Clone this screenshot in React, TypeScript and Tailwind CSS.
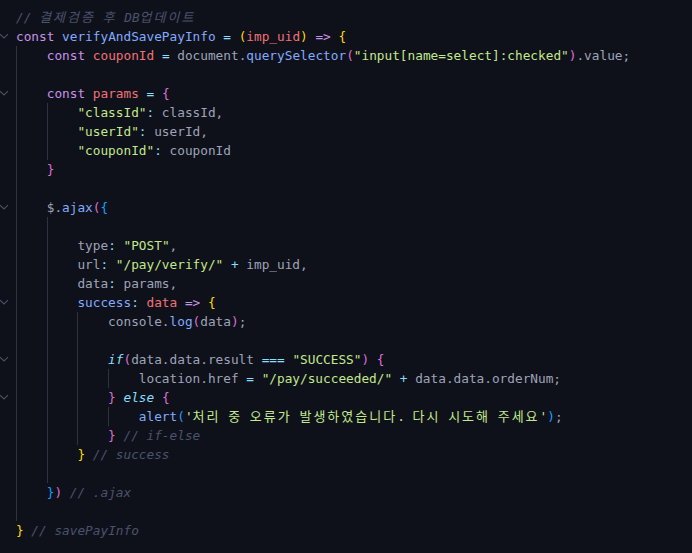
import React from "react";

type Tok = [string, string];

const K = "text-[#c792ea]";
const F = "text-[#82aaff]";
const O = "text-[#89ddff]";
const OI = "text-[#89ddff] italic";
const V = "text-[#f07178]";
const P = "text-[#9ea3b8]";
const S = "text-[#c3e88d]";
const C = "text-[#4b526d] italic";
const B1 = "text-[#ffd700]";
const B2 = "text-[#da70d6]";
const B3 = "text-[#179fff]";

type Line = { indent: number; guides: number; fold?: boolean; toks: Tok[] };

const lines: Line[] = [
  { indent: 0, guides: 0, toks: [["// 결제검증 후 DB업데이트", C]] },
  {
    indent: 0,
    guides: 0,
    fold: true,
    toks: [
      ["const", K],
      [" ", P],
      ["verifyAndSavePayInfo", F],
      [" = ", O],
      ["(", B1],
      ["imp_uid", V],
      [")", B1],
      [" => ", K],
      ["{", B1],
    ],
  },
  {
    indent: 1,
    guides: 1,
    toks: [
      ["const", K],
      [" ", P],
      ["couponId", V],
      [" = ", O],
      ["document.", P],
      ["querySelector", F],
      ["(", B2],
      ['"input[name=select]:checked"', S],
      [")", B2],
      [".value;", P],
    ],
  },
  { indent: 0, guides: 1, toks: [] },
  {
    indent: 1,
    guides: 1,
    fold: true,
    toks: [
      ["const", K],
      [" ", P],
      ["params", V],
      [" = ", O],
      ["{", B2],
    ],
  },
  { indent: 2, guides: 2, toks: [['"classId"', S], [":", O], [" classId,", P]] },
  { indent: 2, guides: 2, toks: [['"userId"', S], [":", O], [" userId,", P]] },
  { indent: 2, guides: 2, toks: [['"couponId"', S], [":", O], [" couponId", P]] },
  { indent: 1, guides: 1, toks: [["}", B2]] },
  { indent: 0, guides: 1, toks: [] },
  {
    indent: 1,
    guides: 1,
    fold: true,
    toks: [
      ["$.", P],
      ["ajax", F],
      ["(", B2],
      ["{", B3],
    ],
  },
  { indent: 0, guides: 2, toks: [] },
  { indent: 2, guides: 2, toks: [["type", P], [":", O], [" ", P], ['"POST"', S], [",", P]] },
  {
    indent: 2,
    guides: 2,
    toks: [
      ["url", P],
      [":", O],
      [" ", P],
      ['"/pay/verify/"', S],
      [" + ", O],
      ["imp_uid,", P],
    ],
  },
  { indent: 2, guides: 2, toks: [["data", P], [":", O], [" params,", P]] },
  {
    indent: 2,
    guides: 2,
    fold: true,
    toks: [
      ["success", F],
      [":", O],
      [" ", P],
      ["data", V],
      [" => ", K],
      ["{", B1],
    ],
  },
  {
    indent: 3,
    guides: 3,
    toks: [
      ["console.", P],
      ["log", F],
      ["(", B2],
      ["data", P],
      [")", B2],
      [";", P],
    ],
  },
  { indent: 0, guides: 3, toks: [] },
  {
    indent: 3,
    guides: 3,
    fold: true,
    toks: [
      ["if", OI],
      ["(", B2],
      ["data.data.result", P],
      [" === ", O],
      ['"SUCCESS"', S],
      [")", B2],
      [" ", P],
      ["{", B2],
    ],
  },
  {
    indent: 4,
    guides: 4,
    toks: [
      ["location.href", P],
      [" = ", O],
      ['"/pay/succeeded/"', S],
      [" + ", O],
      ["data.data.orderNum;", P],
    ],
  },
  {
    indent: 3,
    guides: 3,
    fold: true,
    toks: [
      ["}", B2],
      [" ", P],
      ["else", OI],
      [" ", P],
      ["{", B2],
    ],
  },
  {
    indent: 4,
    guides: 4,
    toks: [
      ["alert", F],
      ["(", B3],
      ["'처리 중 오류가 발생하였습니다. 다시 시도해 주세요'", S],
      [")", B3],
      [";", P],
    ],
  },
  { indent: 3, guides: 3, toks: [["}", B2], [" // if-else", C]] },
  { indent: 2, guides: 2, toks: [["}", B1], [" // success", C]] },
  { indent: 0, guides: 2, toks: [] },
  { indent: 1, guides: 1, toks: [["}", B3], [")", B2], [" // .ajax", C]] },
  { indent: 0, guides: 1, toks: [] },
  { indent: 0, guides: 0, toks: [["}", B1], [" // savePayInfo", C]] },
];

// hangul gets its own font, spaced out to the ~2-column width of the original
function withHangul(text: string) {
  const parts = text.split(/([\uAC00-\uD7A3]+)/);
  return parts.map((part, i) =>
    /[\uAC00-\uD7A3]/.test(part) ? (
      <span
        key={i}
        className="font-['Noto_Sans_CJK_KR',sans-serif] text-[13px] tracking-[2px]"
      >
        {part}
      </span>
    ) : (
      <React.Fragment key={i}>{part}</React.Fragment>
    )
  );
}

function Chevron() {
  return (
    <svg width="10" height="10" viewBox="0 0 10 10" className="-ml-[1px]">
      <path d="M1 3.2 L5 7 L9 3.2" fill="none" stroke="#4b5060" strokeWidth="1.1" />
    </svg>
  );
}

function CodeLine({ line }: { line: Line }) {
  const units = Math.max(line.indent, line.guides);
  return (
    <div className="flex h-[19px] items-center leading-[19px] whitespace-pre">
      <div className="flex w-4 shrink-0 items-center">{line.fold && <Chevron />}</div>
      {Array.from({ length: units }).map((_, i) => (
        <span
          key={i}
          className={
            i < line.guides
              ? "inline-block h-[19px] w-[4ch] shrink-0 border-l border-[#2f3341]"
              : "inline-block h-[19px] w-[4ch] shrink-0"
          }
        />
      ))}
      {line.toks.map(([text, cls], i) => (
        <span key={i} className={cls}>
          {withHangul(text)}
        </span>
      ))}
    </div>
  );
}

export default function App() {
  return (
    <div className="min-h-screen w-full overflow-hidden bg-[#0f111a] pt-[7.5px] font-['DejaVu_Sans_Mono',monospace] text-[12.75px]">
      {lines.map((line, i) => (
        <CodeLine key={i} line={line} />
      ))}
    </div>
  );
}
